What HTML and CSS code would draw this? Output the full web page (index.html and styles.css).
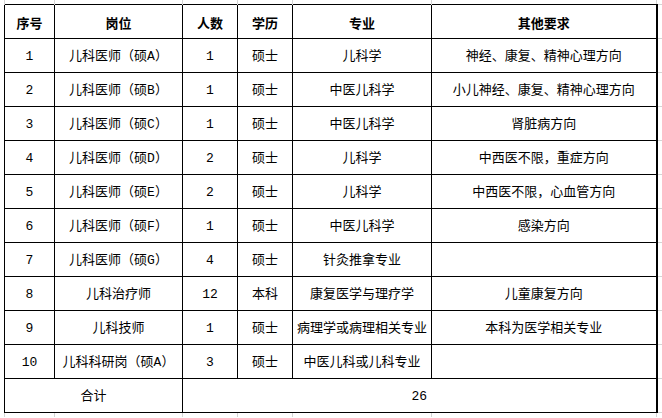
FILE: index.html
```html
<!DOCTYPE html>
<html lang="zh-CN">
<head>
<meta charset="utf-8">
<title>岗位需求表</title>
<link rel="stylesheet" href="styles.css">
</head>
<body>
<table class="sheet">
  <colgroup>
    <col class="c1"><col class="c2"><col class="c3"><col class="c4"><col class="c5"><col class="c6"><col class="cpad">
  </colgroup>
  <tr class="edge">
    <td></td><td></td><td></td><td></td><td></td><td></td><td class="pad"></td>
  </tr>
  <tr class="head">
    <th>序号</th><th>岗位</th><th>人数</th><th>学历</th><th>专业</th><th class="last">其他要求</th><td class="pad"></td>
  </tr>
  <tr>
    <td>1</td><td>儿科医师（硕A）</td><td>1</td><td>硕士</td><td>儿科学</td><td class="last">神经、康复、精神心理方向</td><td class="pad"></td>
  </tr>
  <tr>
    <td>2</td><td>儿科医师（硕B）</td><td>1</td><td>硕士</td><td>中医儿科学</td><td class="last">小儿神经、康复、精神心理方向</td><td class="pad"></td>
  </tr>
  <tr>
    <td>3</td><td>儿科医师（硕C）</td><td>1</td><td>硕士</td><td>中医儿科学</td><td class="last">肾脏病方向</td><td class="pad"></td>
  </tr>
  <tr>
    <td>4</td><td>儿科医师（硕D）</td><td>2</td><td>硕士</td><td>儿科学</td><td class="last">中西医不限，重症方向</td><td class="pad"></td>
  </tr>
  <tr>
    <td>5</td><td>儿科医师（硕E）</td><td>2</td><td>硕士</td><td>儿科学</td><td class="last">中西医不限，心血管方向</td><td class="pad"></td>
  </tr>
  <tr>
    <td>6</td><td>儿科医师（硕F）</td><td>1</td><td>硕士</td><td>中医儿科学</td><td class="last">感染方向</td><td class="pad"></td>
  </tr>
  <tr>
    <td>7</td><td>儿科医师（硕G）</td><td>4</td><td>硕士</td><td>针灸推拿专业</td><td class="last"></td><td class="pad"></td>
  </tr>
  <tr>
    <td>8</td><td>儿科治疗师</td><td>12</td><td>本科</td><td>康复医学与理疗学</td><td class="last">儿童康复方向</td><td class="pad"></td>
  </tr>
  <tr>
    <td>9</td><td>儿科技师</td><td>1</td><td>硕士</td><td>病理学或病理相关专业</td><td class="last">本科为医学相关专业</td><td class="pad"></td>
  </tr>
  <tr>
    <td>10</td><td>儿科科研岗（硕A）</td><td>3</td><td>硕士</td><td>中医儿科或儿科专业</td><td class="last"></td><td class="pad"></td>
  </tr>
  <tr class="total">
    <td colspan="2">合计</td><td colspan="4" class="last">26</td><td class="pad"></td>
  </tr>
  <tr class="edge">
    <td></td><td></td><td></td><td></td><td></td><td></td><td class="pad"></td>
  </tr>
</table>
</body>
</html>
```

FILE: styles.css
```css
html, body {
  margin: 0;
  padding: 0;
  background: #ffffff;
}

body {
  padding-left: 4px;
}

.sheet {
  border-collapse: collapse;
  table-layout: fixed;
  width: 658px;
  font-family: "Liberation Mono", "Noto Sans CJK SC", monospace;
  font-size: 13px;
  color: #000000;
}

.c1 { width: 50px; }
.c2 { width: 128px; }
.c3 { width: 55px; }
.c4 { width: 55px; }
.c5 { width: 139px; }
.c6 { width: 225px; }
.cpad { width: 6px; }

.sheet th,
.sheet td {
  border: 1px solid #000000;
  padding: 2px 0 0 0;
  height: 31px;
  text-align: center;
  vertical-align: middle;
  white-space: nowrap;
  overflow: hidden;
  line-height: 16px;
}

.sheet th {
  font-family: "Noto Sans CJK SC", sans-serif;
  font-weight: 700;
}

.sheet .last {
  border-right: 2px solid #000000;
}

.sheet td.pad {
  border: none;
  border-top: 1px solid #d4d4d4;
  border-bottom: 1px solid #d4d4d4;
}

.edge td {
  height: 4px;
  padding: 0;
  border-top: none;
  border-bottom: none;
  border-left: 1px solid #d4d4d4;
  border-right: 1px solid #d4d4d4;
}

.edge td.pad {
  border: none;
}
```
